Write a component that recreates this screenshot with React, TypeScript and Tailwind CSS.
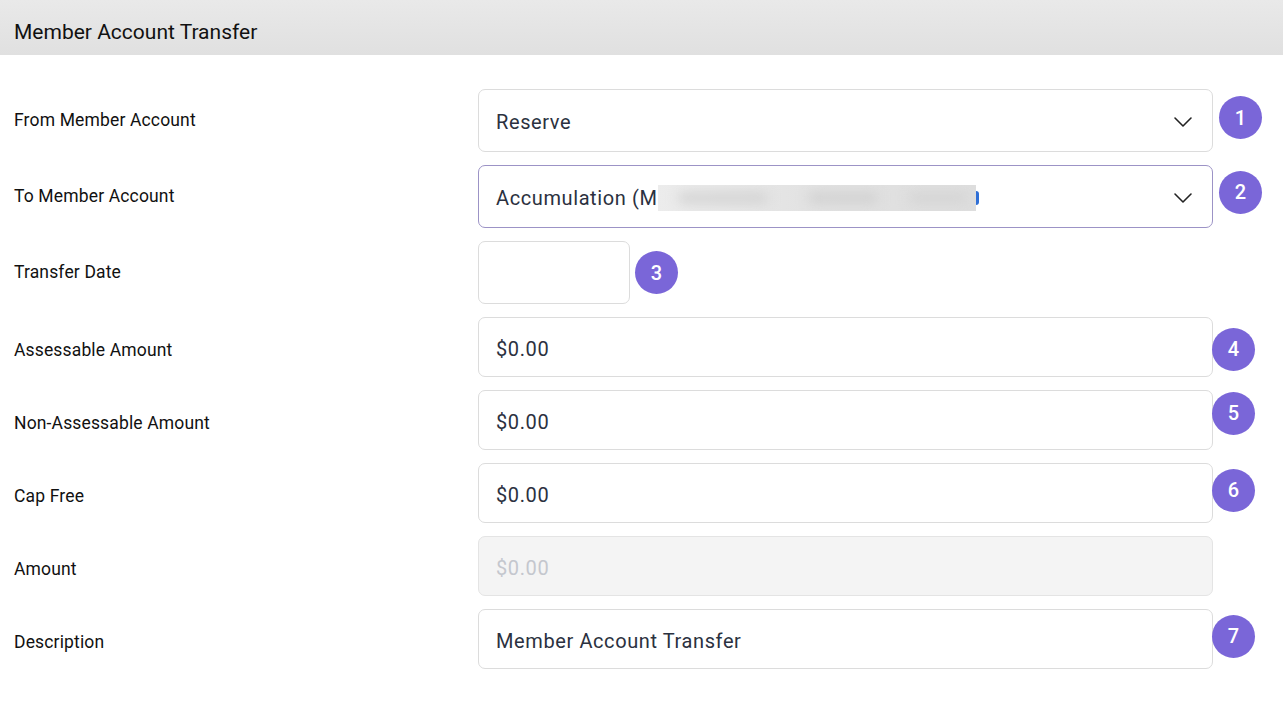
import React from "react";

function Badge({ n }: { n: number }) {
  return (
    <div className="flex h-[43px] w-[43px] shrink-0 items-center justify-center rounded-full bg-[#7a66d8] text-[20px] font-medium text-white [font-family:Roboto,'Liberation_Sans',sans-serif]">
      {n}
    </div>
  );
}

function Chevron() {
  return (
    <svg width="20" height="12" viewBox="0 0 20 12" fill="none" className="shrink-0">
      <path d="M2 2l8 8 8-8" stroke="#222" strokeWidth="1.6" strokeLinecap="round" strokeLinejoin="round" />
    </svg>
  );
}

function Label({ children, low }: { children: React.ReactNode; low?: boolean }) {
  return (
    <div className={`w-[464px] shrink-0 text-[17.5px] tracking-[0.15px] text-[#111] ${low ? "pt-[6px]" : "pt-0"}`}>
      {children}
    </div>
  );
}

const inputText = "pt-[3px] text-[20px] tracking-[0.6px] text-[#2b3140] [font-family:Roboto,'Liberation_Sans',sans-serif]";

export default function App() {
  return (
    <div className="min-h-[725px] w-[1283px] bg-white [font-family:Roboto,'Liberation_Sans',sans-serif]">
      <div className="flex h-[55px] items-center bg-gradient-to-b from-[#e9e9e9] to-[#e0e0e0] px-[14px] pt-[10px]">
        <span className="text-[21px] text-[#111]">Member Account Transfer</span>
      </div>

      <div className="flex flex-col gap-[13px] pl-[14px] pt-[34px]">
        {/* Row 1 */}
        <div className="flex items-center">
          <Label>From Member Account</Label>
          <div className={`flex h-[63px] w-[735px] items-center justify-between rounded-[7px] border border-[#dcdcdc] pl-[17px] pr-[19px] ${inputText}`}>
            <span>Reserve</span>
            <Chevron />
          </div>
          <div className="ml-[6px] -mt-[6px]">
            <Badge n={1} />
          </div>
        </div>

        {/* Row 2 */}
        <div className="flex items-center">
          <Label>To Member Account</Label>
          <div className={`flex h-[63px] w-[735px] items-center justify-between rounded-[7px] border border-[#9c93c6] pl-[17px] pr-[19px] ${inputText}`}>
            <span className="flex items-center">
              <span>Accumulation (M</span>
              <span className="relative ml-[1px] block h-[26px] w-[318px] overflow-hidden">
                <span className="absolute inset-0 bg-gradient-to-r from-[#ececec] via-[#e2e2e2] to-[#dedede]" />
                <span className="absolute left-[20px] top-[8px] h-[10px] w-[90px] rounded-full bg-[#d2d2d2] blur-[6px]" />
                <span className="absolute left-[150px] top-[8px] h-[10px] w-[70px] rounded-full bg-[#d0d0d0] blur-[6px]" />
                <span className="absolute left-[250px] top-[8px] h-[10px] w-[60px] rounded-full bg-[#d4d4d4] blur-[6px]" />
              </span>
              <span className="h-[14px] w-[3px] rounded-r-full bg-[#2f6fd6]" />
            </span>
            <Chevron />
          </div>
          <div className="ml-[6px] -mt-[9px]">
            <Badge n={2} />
          </div>
        </div>

        {/* Row 3 */}
        <div className="flex items-center">
          <Label>Transfer Date</Label>
          <div className="h-[63px] w-[152px] rounded-[7px] border border-[#dcdcdc]" />
          <div className="ml-[5px]">
            <Badge n={3} />
          </div>
        </div>

        {/* Row 4 */}
        <div className="flex items-center">
          <Label low>Assessable Amount</Label>
          <div className={`flex h-[60px] w-[735px] items-center rounded-[7px] border border-[#dcdcdc] pl-[17px] ${inputText}`}>
            $0.00
          </div>
          <div className="-ml-[1px] mt-[4px]">
            <Badge n={4} />
          </div>
        </div>

        {/* Row 5 */}
        <div className="flex items-center">
          <Label low>Non-Assessable Amount</Label>
          <div className={`flex h-[60px] w-[735px] items-center rounded-[7px] border border-[#dcdcdc] pl-[17px] ${inputText}`}>
            $0.00
          </div>
          <div className="-ml-[1px] -mt-[14px]">
            <Badge n={5} />
          </div>
        </div>

        {/* Row 6 */}
        <div className="flex items-center">
          <Label low>Cap Free</Label>
          <div className={`flex h-[60px] w-[735px] items-center rounded-[7px] border border-[#dcdcdc] pl-[17px] ${inputText}`}>
            $0.00
          </div>
          <div className="-ml-[1px] -mt-[6px]">
            <Badge n={6} />
          </div>
        </div>

        {/* Row 7 */}
        <div className="flex items-center">
          <Label low>Amount</Label>
          <div className="flex h-[60px] w-[735px] items-center rounded-[7px] border border-[#e4e4e4] bg-[#f4f4f4] pl-[17px] pt-[3px] text-[20px] tracking-[0.6px] text-[#c4c7ce]">
            $0.00
          </div>
        </div>

        {/* Row 8 */}
        <div className="flex items-center">
          <Label low>Description</Label>
          <div className={`flex h-[60px] w-[735px] items-center rounded-[7px] border border-[#dcdcdc] pl-[17px] ${inputText}`}>
            Member Account Transfer
          </div>
          <div className="-ml-[1px] -mt-[6px]">
            <Badge n={7} />
          </div>
        </div>
      </div>
    </div>
  );
}
